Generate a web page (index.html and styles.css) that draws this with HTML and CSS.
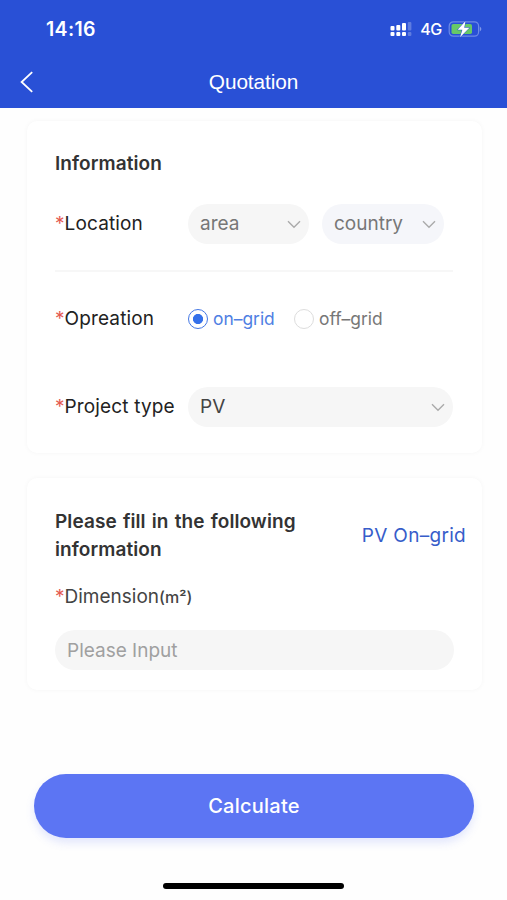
FILE: index.html
```html
<!DOCTYPE html>
<html lang="en">
<head>
<meta charset="utf-8">
<title>Quotation</title>
<link rel="stylesheet" href="styles.css">
</head>
<body>
<header class="header">
  <div class="status">
    <span class="time">14:16</span>
    <div class="indicators">
      <svg class="signal" width="22" height="15" viewBox="0 0 22 15" fill="#fff">
        <rect x="0.5" y="4" width="4" height="4.5" rx="1"/><rect x="6.3" y="3" width="4" height="5.5" rx="1"/><rect x="12" y="1" width="4" height="7.5" rx="1"/>
        <rect x="0.5" y="10" width="4" height="4" rx="1"/><rect x="6.3" y="10" width="4" height="4" rx="1"/><rect x="12" y="10" width="4" height="4" rx="1"/>
        <g opacity=".25"><rect x="17.8" y="0" width="3.6" height="8.5" rx="1"/><rect x="17.8" y="10" width="3.6" height="4" rx="1"/></g>
      </svg>
      <span class="network">4G</span>
      <svg class="battery" width="34" height="18" viewBox="0 0 34 18">
        <rect x="1.2" y="1.8" width="29.4" height="14.4" rx="4.2" fill="none" stroke="#6d8ae6" stroke-width="1.2"/>
        <rect x="3.5" y="4" width="20.5" height="10" rx="1.8" fill="#67c867"/>
        <path d="M31.8 6.5Q35 9 31.8 11.5Z" fill="#7f98e9"/>
        <path d="M17.6 1 9.6 9.8h4.8l-2.4 7.4 9.4-9.4h-5.2Z" fill="#fff" stroke="#2950d6" stroke-width="1" paint-order="stroke"/>
      </svg>
    </div>
  </div>
  <nav class="nav">
    <svg class="back" width="14" height="22" viewBox="0 0 14 22"><path d="M12.2 1.2 1.6 11l10.6 9.8" fill="none" stroke="#fff" stroke-width="1.8"/></svg>
    <h1 class="nav-title">Quotation</h1>
  </nav>
</header>
<main class="content">
  <section class="card info">
    <h2 class="heading">Information</h2>
    <div class="row location">
      <span class="label"><i class="star">*</i><span>Location</span></span>
      <div class="select area"><span>area</span><svg class="chevron" width="14" height="9" viewBox="0 0 14 9"><path d="m1 1.2 6 6 6-6"/></svg></div>
      <div class="select country"><span>country</span><svg class="chevron" width="14" height="9" viewBox="0 0 14 9"><path d="m1 1.2 6 6 6-6"/></svg></div>
    </div>
    <div class="row operation">
      <span class="label"><i class="star">*</i><span>Opreation</span></span>
      <div class="option checked"><span class="radio"></span><span>on–grid</span></div>
      <div class="option"><span class="radio"></span><span>off–grid</span></div>
    </div>
    <div class="row project">
      <span class="label"><i class="star">*</i><span>Project type</span></span>
      <div class="select type"><span>PV</span><svg class="chevron" width="14" height="9" viewBox="0 0 14 9"><path d="m1 1.2 6 6 6-6"/></svg></div>
    </div>
  </section>
  <section class="card details">
    <div class="details-head">
      <h2 class="heading">Please fill in the following<br>information</h2>
      <span class="mode">PV On–grid</span>
    </div>
    <div class="dimension"><i class="star">*</i><span>Dimension</span><span class="unit">(m²)</span></div>
    <div class="input">Please Input</div>
  </section>
  <div class="button">Calculate</div>
</main>
<div class="home-bar"></div>
</body>
</html>
```

FILE: styles.css
```css
* { box-sizing: border-box; }
body {
  margin: 0;
  height: 900px;
  background: #fefefe;
  color: #222;
  font: 19px/28px Inter, "Liberation Sans", sans-serif;
  overflow: hidden;
}
h1, h2 { margin: 0; font-size: inherit; }
svg { display: block; flex: none; }
.header { height: 108px; background: #2950d6; color: #fff; }
.status { height: 56px; padding: 2px 25px 0 46px; display: flex; align-items: center; justify-content: space-between; }
.time { font-size: 19.5px; font-weight: 600; letter-spacing: .35px; }
.indicators { display: flex; align-items: center; }
.network { margin: 0 6px 0 8px; font-size: 16px; font-weight: 500; letter-spacing: -.3px; }
.nav { height: 52px; padding: 0 20px; display: grid; grid-template-columns: 14px 1fr 14px; align-items: center; }
.nav-title { text-align: center; font: 400 20.8px/28px "Liberation Sans", sans-serif; letter-spacing: -.1px; }
.content { padding: 13px 25px 0 27px; }
.card { background: #fff; border-radius: 10px; box-shadow: 0 0 5px rgba(0, 0, 0, .04); }
.info { height: 332px; padding: 29px 29px 0 28px; }
.heading { font-weight: 600; color: #333; letter-spacing: .08px; word-spacing: 1.3px; }
.row { display: flex; align-items: center; height: 40px; white-space: nowrap; }
.label { width: 133px; display: flex; flex: none; letter-spacing: .15px; }
.star { width: 9.5px; flex: none; color: #e45a52; font-style: normal; }
.location { height: 94px; border-bottom: 2px solid #f7f7f7; }
.select { height: 40px; padding: 0 8px 0 12px; display: flex; align-items: center; justify-content: space-between; border-radius: 20px; background: #f6f6f6; color: #777; }
.area { width: 121px; }
.country { width: 122px; margin-left: 13px; background: #f5f6fa; }
.type { width: 265px; color: #444; }
.chevron { fill: none; stroke: #aaa; stroke-width: 1.4; }
.operation { margin-top: 26px; padding-top: 1px; }
.option { display: flex; align-items: center; width: 106px; color: #777; font-size: 17.4px; }
.radio { width: 20px; height: 20px; margin-right: 5px; flex: none; border: 1.5px solid #ddd; border-radius: 50%; }
.checked { color: #4f7fe3; }
.checked .radio { border-color: #4477e4; background: radial-gradient(circle, #3470ea 4.7px, transparent 5.4px); }
.project { margin-top: 49px; }
.details { height: 212px; margin-top: 25px; padding: 30px 16px 0 28px; }
.details-head { display: flex; align-items: center; justify-content: space-between; white-space: nowrap; }
.mode { color: #375dca; letter-spacing: .3px; }
.dimension { display: flex; margin-top: 19px; color: #444; }
.unit { font-size: 16px; font-weight: 500; }
.input { width: 399px; height: 40px; margin-top: 19px; padding: 0 12px; border-radius: 20px; background: #f6f6f6; color: #a0a0a0; line-height: 41px; }
.button { width: 440px; height: 64px; margin: 84px 0 0 7px; border-radius: 32px; background: #5c75f3; color: #fff; box-shadow: 0 5px 8px rgba(92, 117, 243, .17); text-align: center; line-height: 65px; font-size: 20px; font-weight: 500; letter-spacing: .25px; }
.home-bar { width: 181px; height: 6px; margin: 45px 0 0 163px; border-radius: 3px; background: #000; }
```
